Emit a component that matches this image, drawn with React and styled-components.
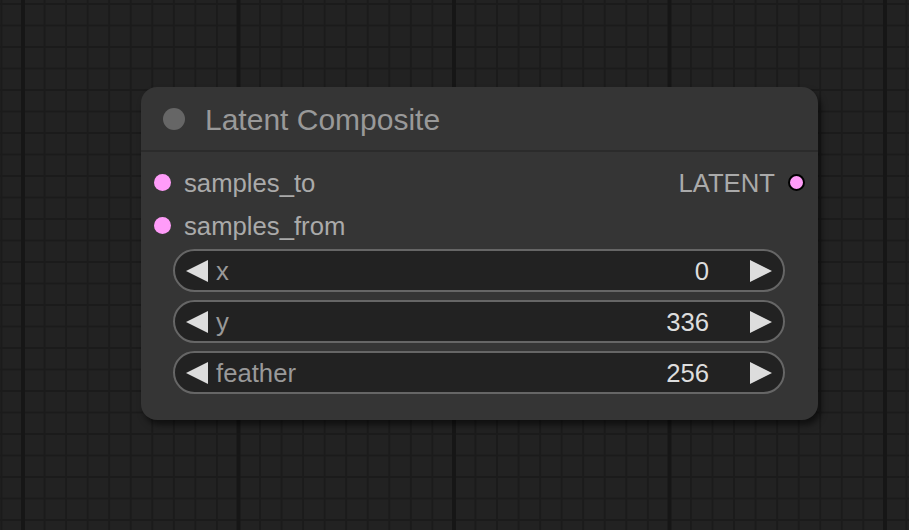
import React from 'react'
import styled, { createGlobalStyle } from 'styled-components'

const GlobalStyle = createGlobalStyle`
  html, body {
    margin: 0;
    padding: 0;
    background: #222;
  }
  body {
    font-family: "Liberation Sans", Arial, sans-serif;
  }
`

const inputs = [
  { name: 'samples_to', output: 'LATENT' },
  { name: 'samples_from' }
]

const widgets = [
  { label: 'x', value: 0 },
  { label: 'y', value: 336 },
  { label: 'feather', value: 256 }
]

const Canvas = styled.div`
  position: relative;
  width: 909px;
  height: 530px;
  overflow: hidden;
  background-color: #222;
  background-image:
    linear-gradient(to right, #161616 4px, transparent 4px),
    linear-gradient(to right, #1b1b1b 2px, transparent 2px),
    linear-gradient(to bottom, #1b1b1b 2px, transparent 2px);
  background-size: 215.5px 100%, 21.55px 100%, 100% 21.5px;
  background-position: 21px 0, 22px 0, 0 3px;
`

const Node = styled.div`
  position: absolute;
  left: 141px;
  top: 87px;
  width: 677px;
  height: 333px;
  box-sizing: border-box;
  background: #353535;
  border-radius: 16px;
  box-shadow: 3px 5px 6px rgba(0, 0, 0, 0.55);
  display: flex;
  flex-direction: column;
`

const Title = styled.div`
  height: 65px;
  box-sizing: border-box;
  border-bottom: 2px solid #2b2b2b;
  display: flex;
  align-items: center;
  gap: 20px;
  padding-left: 22px;
`

const TitleDot = styled.span`
  width: 22px;
  height: 22px;
  border-radius: 50%;
  background: #666;
  flex: none;
`

const TitleText = styled.span`
  font-size: 30px;
  color: #999;
  line-height: 1;
  padding-top: 2px;
`

const Slots = styled.div`
  padding-top: 9px;
  display: flex;
  flex-direction: column;
`

const SlotRow = styled.div`
  height: 43px;
  display: flex;
  align-items: center;
  justify-content: space-between;
  padding: 0 13px;
`

const SlotSide = styled.div`
  display: flex;
  align-items: center;
  gap: 13px;
`

const Dot = styled.span`
  width: ${p => (p.$outlined ? 13 : 17)}px;
  height: ${p => (p.$outlined ? 13 : 17)}px;
  border-radius: 50%;
  background: #ff9cf9;
  border: ${p => (p.$outlined ? '2px solid #000' : 'none')};
  flex: none;
`

const SlotLabel = styled.span`
  font-size: 25.7px;
  color: #aaa;
  padding-top: 2px;
`

const Widgets = styled.div`
  display: flex;
  flex-direction: column;
  gap: 8px;
  padding: 2px 33px 0 32px;
`

const Widget = styled.div`
  height: 43px;
  box-sizing: border-box;
  background: #222;
  border: 2px solid #666;
  border-radius: 22px;
  display: flex;
  align-items: center;
  padding: 0 11px;
`

const Arrow = styled.svg`
  width: 22px;
  height: 22px;
  flex: none;
  fill: #ddd;
`

const WidgetLabel = styled.span`
  flex: 1;
  font-size: 25.7px;
  color: #999;
  margin-left: 8px;
  padding-top: 1px;
`

const WidgetValue = styled.span`
  font-size: 25.7px;
  color: #ddd;
  margin-right: 41px;
  padding-top: 1px;
`

function LeftArrow() {
  return (
    <Arrow viewBox="0 0 22 22">
      <polygon points="22,0 0,11 22,22" />
    </Arrow>
  )
}

function RightArrow() {
  return (
    <Arrow viewBox="0 0 22 22">
      <polygon points="0,0 22,11 0,22" />
    </Arrow>
  )
}

export default function App() {
  return (
    <>
      <GlobalStyle />
      <Canvas>
        <Node>
          <Title>
            <TitleDot />
            <TitleText>Latent Composite</TitleText>
          </Title>
          <Slots>
            {inputs.map(s => (
              <SlotRow key={s.name}>
                <SlotSide>
                  <Dot />
                  <SlotLabel>{s.name}</SlotLabel>
                </SlotSide>
                {s.output && (
                  <SlotSide>
                    <SlotLabel>{s.output}</SlotLabel>
                    <Dot $outlined />
                  </SlotSide>
                )}
              </SlotRow>
            ))}
          </Slots>
          <Widgets>
            {widgets.map(w => (
              <Widget key={w.label}>
                <LeftArrow />
                <WidgetLabel>{w.label}</WidgetLabel>
                <WidgetValue>{w.value}</WidgetValue>
                <RightArrow />
              </Widget>
            ))}
          </Widgets>
        </Node>
      </Canvas>
    </>
  )
}
